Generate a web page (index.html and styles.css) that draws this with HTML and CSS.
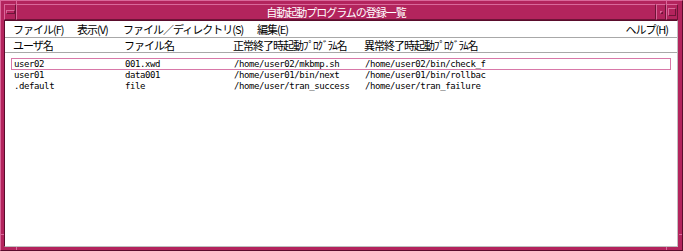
FILE: index.html
```html
<!DOCTYPE html>
<html lang="ja">
<head>
    <meta charset="UTF-8">
    <title>自動起動プログラムの登録一覧</title>
    <link rel="stylesheet" href="styles.css">
</head>
<body>
    <div class="frame">
        <span class="tick tick-tl"></span>
        <span class="tick tick-tr"></span>
        <span class="tick tick-bl"></span>
        <span class="tick tick-br"></span>
        <span class="tick tick-lb"></span>
        <span class="tick tick-rb"></span>

        <div class="titlebar">
            <div class="tb-button tb-menu"><span class="menu-bar-glyph"></span></div>
            <div class="tb-title">自動起動プログラムの登録一覧</div>
            <div class="tb-button tb-min"><span class="min-glyph"></span></div>
            <div class="tb-button tb-max"><span class="max-glyph"></span></div>
        </div>

        <div class="client">
            <div class="menubar">
                <span class="menu-item m-file">ファイル(F)</span>
                <span class="menu-item m-view">表示(V)</span>
                <span class="menu-item m-dir">ファイル／ディレクトリ(S)</span>
                <span class="menu-item m-edit">編集(E)</span>
                <span class="menu-item m-help">ヘルプ(H)</span>
            </div>

            <div class="header">
                <span class="col c1">ユーザ名</span>
                <span class="col c2">ファイル名</span>
                <span class="col c3">正常終了時起動ﾌﾟﾛｸﾞﾗﾑ名</span>
                <span class="col c4">異常終了時起動ﾌﾟﾛｸﾞﾗﾑ名</span>
            </div>

            <div class="list">
                <div class="row selected">
                    <span class="col c1">user02</span>
                    <span class="col c2">001.xwd</span>
                    <span class="col c3">/home/user02/mkbmp.sh</span>
                    <span class="col c4">/home/user02/bin/check_f</span>
                </div>
                <div class="row">
                    <span class="col c1">user01</span>
                    <span class="col c2">data001</span>
                    <span class="col c3">/home/user01/bin/next</span>
                    <span class="col c4">/home/user01/bin/rollbac</span>
                </div>
                <div class="row">
                    <span class="col c1">.default</span>
                    <span class="col c2">file</span>
                    <span class="col c3">/home/user/tran_success</span>
                    <span class="col c4">/home/user/tran_failure</span>
                </div>
            </div>
        </div>
    </div>
</body>
</html>
```

FILE: styles.css
```css
body {
    margin: 0;
    padding: 0;
    background-color: #ffffff;
    font-family: "Noto Sans CJK JP", "DejaVu Sans", sans-serif;
}

/* window frame */
.frame {
    position: relative;
    width: 683px;
    height: 251px;
    box-sizing: border-box;
    padding: 3px 4px 3px 3px;
    display: flex;
    flex-direction: column;
    background-color: #b3245d;
    border-top: 1px solid #d9689a;
    border-left: 1px solid #d9689a;
    border-right: 1px solid #5a0c2c;
    border-bottom: 1px solid #5a0c2c;
}

.tick {
    position: absolute;
    background-color: #d9689a;
}
.tick-tl { left: 15px; top: 0; width: 1px; height: 3px; }
.tick-tr { left: 665px; top: 0; width: 1px; height: 3px; }
.tick-bl { left: 15px; bottom: 0; width: 1px; height: 3px; }
.tick-br { left: 665px; bottom: 0; width: 1px; height: 3px; }
.tick-lb { left: 0; top: 233px; width: 3px; height: 1px; }
.tick-rb { right: 0; top: 233px; width: 3px; height: 1px; }

/* title bar */
.titlebar {
    display: flex;
    height: 16px;
    flex-shrink: 0;
}

.tb-button {
    display: flex;
    align-items: center;
    justify-content: center;
    box-sizing: border-box;
    border-top: 1px solid #d9689a;
    border-left: 1px solid #d9689a;
    border-right: 1px solid #6e1438;
    border-bottom: 1px solid #6e1438;
}
.tb-menu { width: 12px; }
.tb-min { width: 10px; }
.tb-max { width: 12px; }

.menu-bar-glyph {
    width: 7px;
    height: 2px;
    border-top: 1px solid #d9689a;
    border-left: 1px solid #d9689a;
    border-right: 1px solid #6e1438;
    border-bottom: 1px solid #6e1438;
}
.min-glyph {
    width: 1px;
    height: 1px;
    border-top: 1px solid #d9689a;
    border-left: 1px solid #d9689a;
    border-right: 1px solid #6e1438;
    border-bottom: 1px solid #6e1438;
}
.max-glyph {
    width: 6px;
    height: 6px;
    border-top: 1px solid #d9689a;
    border-left: 1px solid #d9689a;
    border-right: 1px solid #6e1438;
    border-bottom: 1px solid #6e1438;
}

.tb-title {
    flex: 1;
    box-sizing: border-box;
    text-align: center;
    color: #ffffff;
    font-size: 11px;
    letter-spacing: -1px;
    line-height: 14px;
    border-top: 1px solid #d9689a;
    border-left: 1px solid #d9689a;
    border-right: 1px solid #6e1438;
    border-bottom: 1px solid #6e1438;
}

/* client area */
.client {
    flex: 1;
    background-color: #ffffff;
    display: flex;
    flex-direction: column;
    border-top: 1px solid #5a0c2c;
    border-left: 1px solid #5a0c2c;
    border-right: 1px solid #c0c0c0;
    border-bottom: 1px solid #c0c0c0;
}

.menubar {
    display: flex;
    height: 16px;
    align-items: center;
    padding-left: 8px;
    padding-right: 9px;
    border-bottom: 1px solid #a8a8a8;
    font-size: 11px;
    letter-spacing: -1px;
    color: #000000;
}
.menu-item { white-space: nowrap; }
.m-file { width: 64px; }
.m-view { width: 46px; }
.m-dir { width: 134px; }
.m-help { margin-left: auto; }

.header {
    display: flex;
    height: 14px;
    align-items: center;
    padding-left: 8px;
    border-bottom: 1px solid #a8a8a8;
    font-size: 11px;
    letter-spacing: -1px;
    color: #000000;
}

.col { white-space: nowrap; overflow: hidden; }
.c1 { width: 111px; }
.c2 { width: 109px; }
.c3 { width: 131px; }
.c4 { width: 125px; }

.list {
    padding: 5px 6px 0 6px;
    font-family: "DejaVu Sans Mono", "Liberation Mono", monospace;
    font-size: 9px;
    letter-spacing: -0.4px;
    color: #000000;
}

.row {
    display: flex;
    height: 11px;
    line-height: 11px;
    padding-left: 3px;
}
.row.selected {
    height: 10px;
    padding-left: 2px;
    border: 1px solid #d878a8;
}
```
